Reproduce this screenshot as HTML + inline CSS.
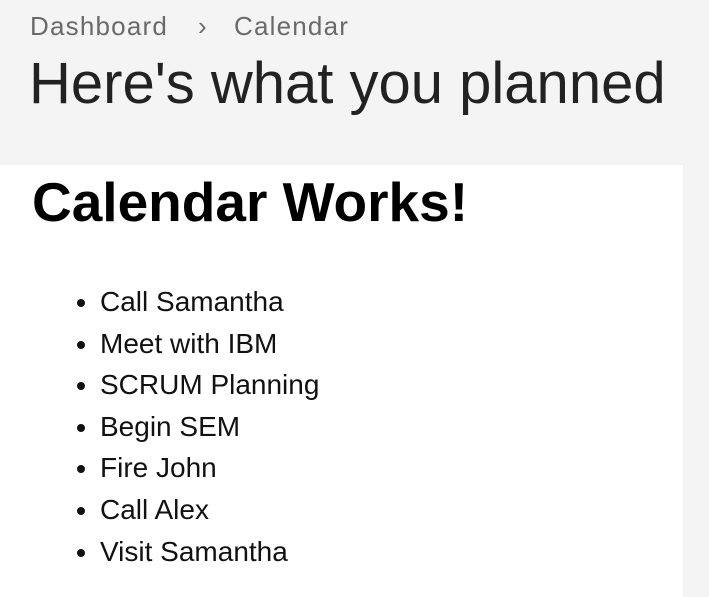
<!DOCTYPE html>
<html><head><style>
body{margin:0;width:709px;height:597px;background:#f4f4f4;font-family:"Liberation Sans",Arial,sans-serif;position:relative;overflow:hidden}
.panel{position:absolute;left:0;top:165px;width:683px;height:432px;background:#fff}
.t{position:absolute;white-space:nowrap;line-height:1}
.bc{left:30px;top:13px;font-size:26px;color:#6a6a6a;letter-spacing:1.2px}
.h{left:29px;top:55px;font-size:58px;color:#222}
.h2{left:32px;top:175px;font-size:55px;font-weight:bold;color:#000}
ul{position:absolute;left:0;top:281px;margin:0;padding:0 0 0 100px;font-size:28px;color:#111;line-height:41.6px}
</style></head><body>
<div class="panel"></div>
<div class="t bc">Dashboard<span style="position:absolute;left:168px">›</span><span style="position:absolute;left:204px">Calendar</span></div>
<div class="t h">Here's what you planned</div>
<div class="t h2">Calendar Works!</div>
<ul>
<li>Call Samantha</li>
<li>Meet with IBM</li>
<li>SCRUM Planning</li>
<li>Begin SEM</li>
<li>Fire John</li>
<li>Call Alex</li>
<li>Visit Samantha</li>
</ul>
</body></html>
